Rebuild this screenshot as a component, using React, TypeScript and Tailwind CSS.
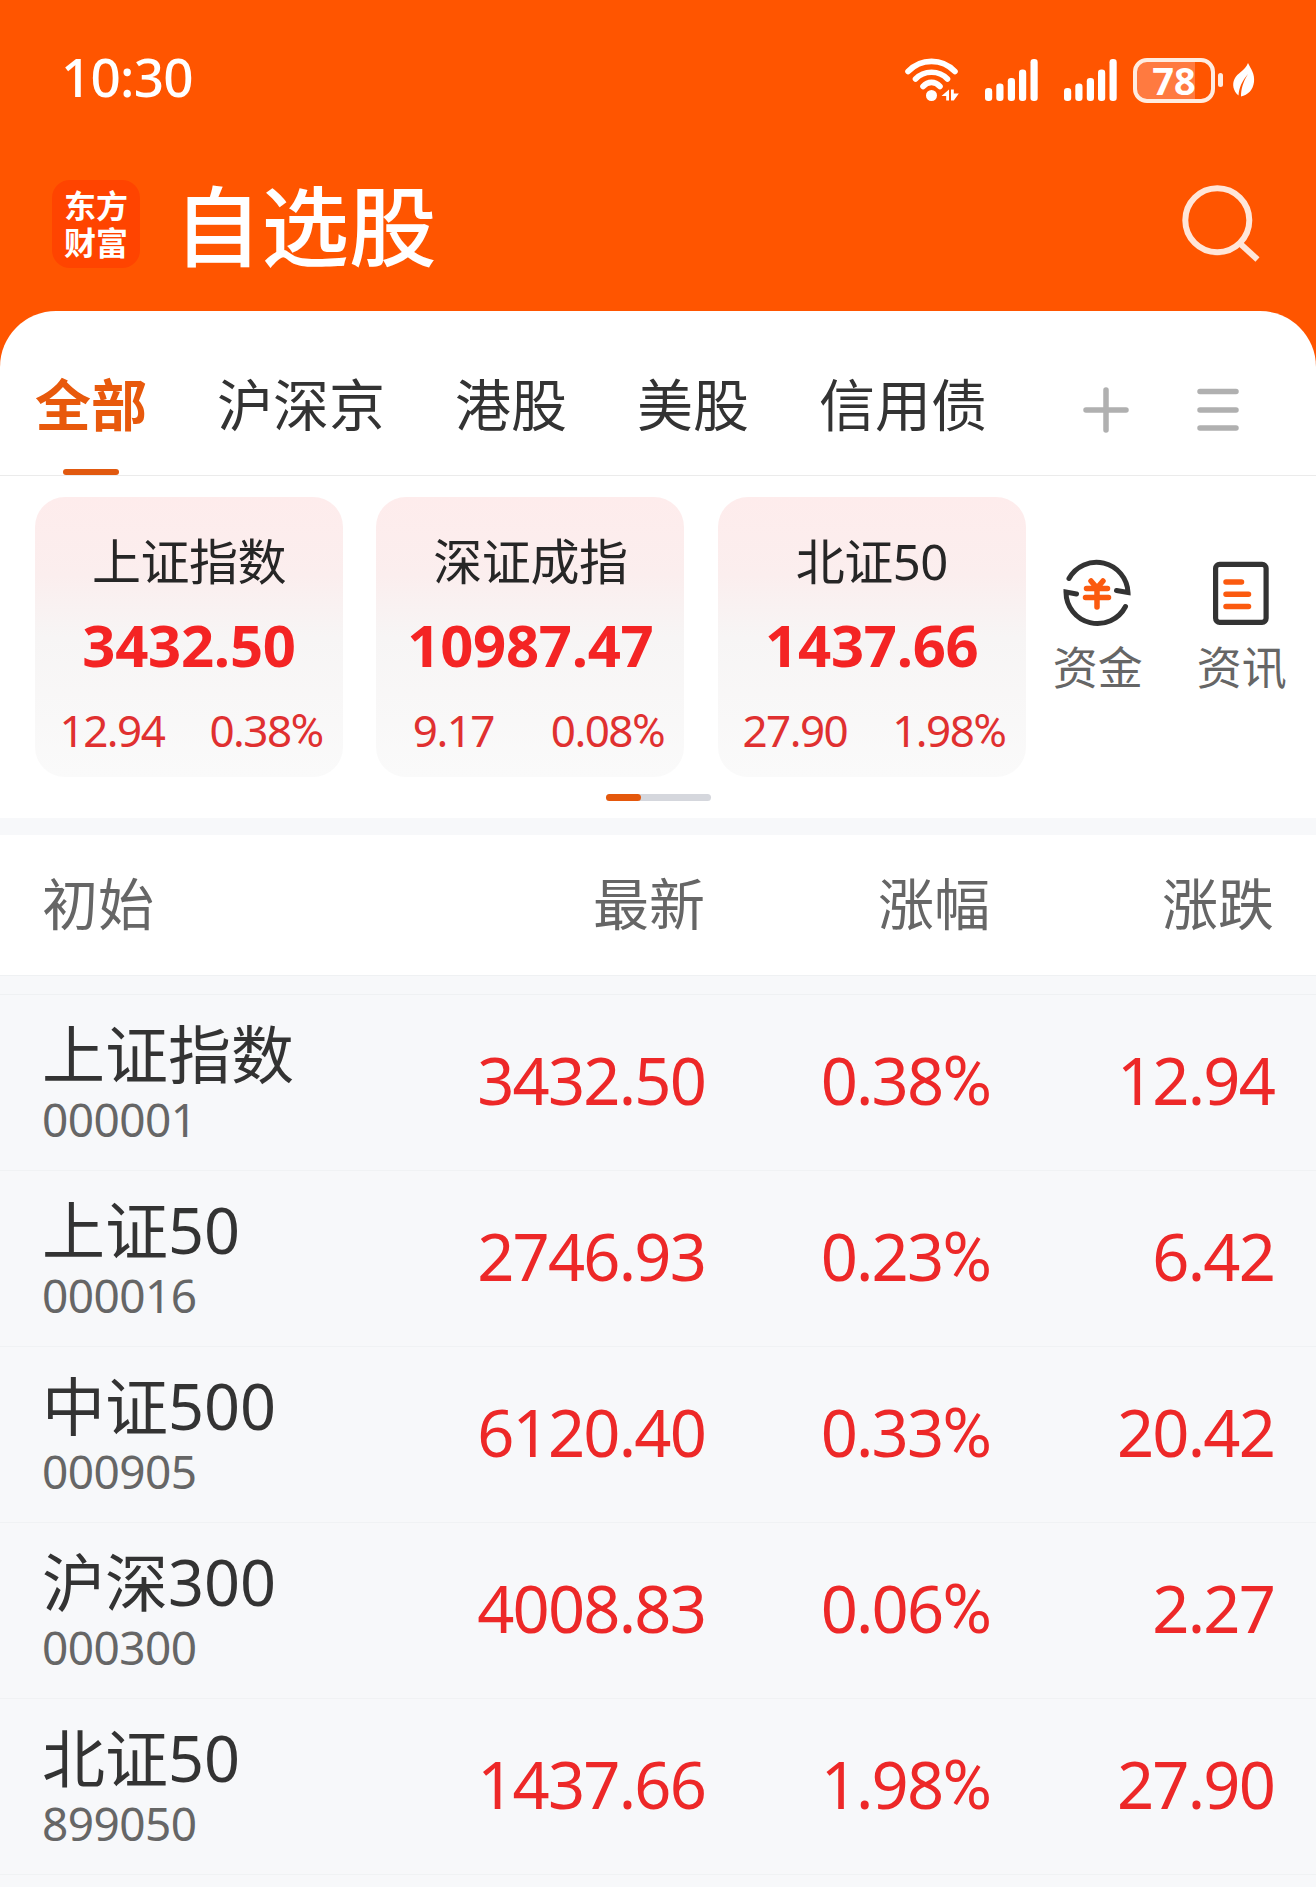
import React from 'react';

interface Quote {
  name: string;
  code: string;
  price: string;
  percent: string;
  change: string;
}

const tabs = ['全部', '沪深京', '港股', '美股', '信用债'];

const cards = [
  { name: '上证指数', price: '3432.50', change: '12.94', percent: '0.38' },
  { name: '深证成指', price: '10987.47', change: '9.17', percent: '0.08' },
  { name: '北证50', price: '1437.66', change: '27.90', percent: '1.98' },
];

const quotes: Quote[] = [
  { name: '上证指数', code: '000001', price: '3432.50', percent: '0.38', change: '12.94' },
  { name: '上证50', code: '000016', price: '2746.93', percent: '0.23', change: '6.42' },
  { name: '中证500', code: '000905', price: '6120.40', percent: '0.33', change: '20.42' },
  { name: '沪深300', code: '000300', price: '4008.83', percent: '0.06', change: '2.27' },
  { name: '北证50', code: '899050', price: '1437.66', percent: '1.98', change: '27.90' },
];

const Percent: React.FC<{ value: string }> = ({ value }) => (
  <>
    {value}
    <span className="font-['Roboto',sans-serif] text-[1.04em]">%</span>
  </>
);

const WifiIcon = () => (
  <svg className="w-[56px] h-[44px]" viewBox="0 0 56 44" fill="none" stroke="#fff" strokeWidth="5.6" strokeLinecap="round">
    <path d="M4 13.5C17 0 38 0 51 13.5" />
    <path d="M11.5 21C20 12 35 12 43.5 21" />
    <path d="M19 28.5C24 23 31 23 36 28.5" />
    <circle cx="27.500" cy="37.500" r="5.500" fill="#fff" stroke="none" />
    <path d="M45 31.500v11h-2.800v-4.500h-4.700zM47 31.500h2.800v4h5l-5 7h-2.800z" fill="#fff" stroke="none" />
  </svg>
);

const SignalIcon = () => (
  <svg className="w-[54px] h-[42px]" viewBox="0 0 54 42" fill="#fff">
    <rect x="0" y="29" width="7.200" height="13" rx="3.200" />
    <rect x="11.300" y="24.500" width="7.200" height="17.500" rx="3.200" />
    <rect x="22.800" y="19" width="7.200" height="23" rx="3.200" />
    <rect x="34" y="10.500" width="7.200" height="31.500" rx="3.200" />
    <rect x="45.500" y="0" width="7.200" height="42" rx="3.200" />
  </svg>
);

const LeafIcon = () => (
  <svg className="w-[24px] h-[36px]" viewBox="0 0 24 36">
    <path d="M16 1C19 7 23 12 22 20C21 28 16 33 9 34.500C9 27 11 20 16 12C10 19 7 26 6.500 33.500C1 29 0 22 2.500 17C5 11 13 9 16 1z" fill="#fff" />
  </svg>
);

const FundsIcon = () => (
  <svg className="-ml-[2px] w-[70px] h-[70px]" viewBox="0 0 70 70" fill="none" stroke="#333" strokeWidth="5" strokeLinecap="round">
    <path d="M7 20.500A31.500 31.500 0 0 1 66 34.500L54.500 32.500" />
    <path d="M63.500 48.500A31.500 31.500 0 0 1 4 34L14.500 36" />
    <path d="M29 23l6 7M41 23l-6 7M24.500 30.500h21M23.500 39.500h23M35 31v18" stroke="#fb5a0f" strokeWidth="5.500" />
  </svg>
);

const NewsIcon = () => (
  <svg className="-ml-[2px] w-[70px] h-[70px]" viewBox="0 0 70 70" fill="none" stroke="#333" strokeWidth="5.200" strokeLinecap="round">
    <rect x="9.600" y="6.300" width="50.500" height="58" rx="4" />
    <path d="M20 24h15.500M20 36.200h22.500M20 48.500h22.500" stroke="#fb5a0f" strokeWidth="5.500" />
  </svg>
);

const StatusBar = () => (
  <div className="flex h-[155px] items-start justify-between pl-[61px] pr-[60px]">
    <div className="mt-[39px] text-[53px] font-medium leading-[76px] tracking-[-0.015em]">10:30</div>
    <div className="mt-[57px] flex h-[46px] items-center">
      <WifiIcon />
      <div className="ml-[25px]"><SignalIcon /></div>
      <div className="ml-[25px]"><SignalIcon /></div>
      <div className="ml-[15px] h-[45px] w-[82px] rounded-[14px] border-4 border-[#ffece0] bg-[linear-gradient(90deg,#ff7a40_58px,transparent_58px)] text-center text-[38px] font-bold leading-[36px]">
        78
      </div>
      <div className="ml-[3px] h-[14px] w-[5px] rounded-full bg-[#ffece0]" />
      <div className="ml-[9px]"><LeafIcon /></div>
    </div>
  </div>
);

const Header = () => (
  <div className="flex h-[156px] items-start pl-[52px] pr-[54px]">
    <div className="mt-[25px] flex h-[88px] w-[88px] flex-col justify-center rounded-[18px] bg-[#ff4400] text-center text-[32px] font-bold leading-[37px]">
      <span>东方</span>
      <span>财富</span>
    </div>
    <h1 className="ml-[34px] mt-[16px] text-[87.500px] font-medium leading-[110px]">自选股</h1>
    <svg className="ml-auto mt-[27px] h-[80px] w-[80px]" viewBox="0 0 80 80" fill="none" stroke="#ffe6d8" strokeWidth="6">
      <circle cx="35.300" cy="38.300" r="32" />
      <path d="M58 61.500L75.500 77.500" />
    </svg>
  </div>
);

const TabBar = () => (
  <div className="flex h-[165px] items-start border-b border-[#ebebeb] pl-[35px] text-[56px] leading-[80px] text-[#333]">
    <div className="flex gap-[70px] pt-[53px]">
      {tabs.map((tab, i) => (
        <div key={tab} className={`flex flex-col items-center ${i === 0 ? 'font-bold text-[#e8590c]' : ''}`}>
          {tab}
          {i === 0 && <span className="mt-[25px] h-[6px] w-[56px] rounded-[3px] bg-[#e1590f]" />}
        </div>
      ))}
    </div>
    <svg className="ml-[95px] mt-[75px] h-[48px] w-[48px]" viewBox="0 0 48 48" stroke="#b0b0b0" strokeWidth="5.500" strokeLinecap="round">
      <path d="M24 4v40M4 24h40" />
    </svg>
    <svg className="ml-[65px] mt-[75px] h-[48px] w-[48px]" viewBox="0 0 48 48" stroke="#b0b0b0" strokeWidth="5.500" strokeLinecap="round">
      <path d="M5 5.500h36M5 24h36M5 42h36" />
    </svg>
  </div>
);

const IndexCards = () => (
  <div className="h-[342px] pt-[21px]">
    <div className="flex pl-[35px]">
      <div className="flex gap-[33.400px]">
        {cards.map(card => (
          <div
            key={card.name}
            className="h-[280px] w-[308px] rounded-[30px] bg-[linear-gradient(180deg,#feecec_0%,#fbeeee_28%,#f7f5f5_50%,#fafafa_100%)] pt-[29px] text-center"
          >
            <div className="text-[49px] leading-[70px] tracking-[-0.01em] text-[#262626]">{card.name}</div>
            <div className="mt-[11px] text-[58px] font-bold leading-[76px] tracking-[-0.005em] text-[#f42424]">{card.price}</div>
            <div className="mt-[16px] grid grid-cols-2 text-[44px] leading-[62px] tracking-[-0.035em] text-[#e03030]">
              <span>{card.change}</span>
              <span><Percent value={card.percent} /></span>
            </div>
          </div>
        ))}
      </div>
      <div className="ml-[27px] mt-[61px] flex gap-[54px] text-[45px] leading-[60px] text-[#666]">
        <div className="flex w-[90px] flex-col items-center gap-[10px]">
          <FundsIcon />
          资金
        </div>
        <div className="flex w-[90px] flex-col items-center gap-[10px]">
          <NewsIcon />
          资讯
        </div>
      </div>
    </div>
    <div className="mx-auto mt-[17px] h-[7px] w-[105px] rounded-full bg-[#d5d7dd]">
      <div className="h-full w-[35px] rounded-full bg-[#e5580c]" />
    </div>
  </div>
);

const columns = 'grid grid-cols-[405px_300px_285px_284px]';

const App: React.FC = () => {
  return (
    <div className="h-[1887px] w-[1316px] overflow-hidden bg-[#ff5500] font-['Noto_Sans','Noto_Sans_CJK_SC',sans-serif] text-white">
      <StatusBar />
      <Header />
      <div className="h-[1576px] rounded-t-[56px] bg-white">
        <TabBar />
        <IndexCards />
        <div className="h-[17px] bg-[#f7f8fa]" />

        {/* Column titles */}
        <div className={`${columns} h-[140px] pt-[28px] text-right text-[56px] leading-[80px] text-[#666]`}>
          <span className="pl-[42px] text-left">初始</span>
          <span>最新</span>
          <span>涨幅</span>
          <span>涨跌</span>
        </div>

        <div className="h-[912px] bg-[#f7f8fa]">
          <div className="h-[20px] border-y border-[#eff1f3]" />
          {quotes.map(quote => (
            <div
              key={quote.code}
              className={`${columns} h-[176px] border-b border-[#f0f2f4] text-right text-[65px] leading-[90px] tracking-[-0.028em] text-[#ed2828]`}
            >
              <div className="pl-[42px] pt-[19px] text-left tracking-normal">
                <div className="text-[63px] leading-[80px] text-[#333]">{quote.name}</div>
                <div className="text-[46px] leading-[50px] tracking-[-0.012em] text-[#666]">{quote.code}</div>
              </div>
              <span className="pt-[40px]">{quote.price}</span>
              <span className="pt-[40px]"><Percent value={quote.percent} /></span>
              <span className="pt-[40px]">{quote.change}</span>
            </div>
          ))}
        </div>
      </div>
    </div>
  );
};

export default App;
